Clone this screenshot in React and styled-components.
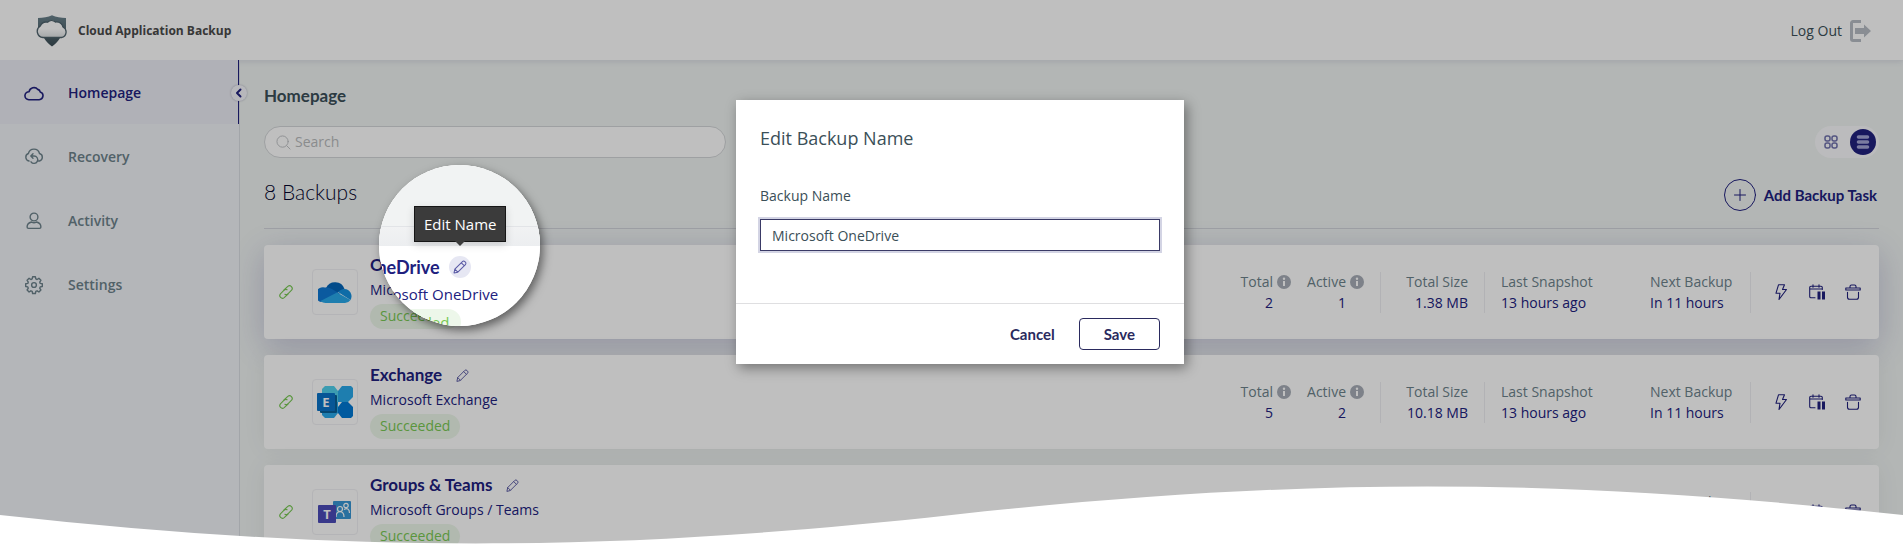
import React, { useState } from "react";
import styled, { createGlobalStyle } from "styled-components";

const navy = "#20207e";
const slate = "#6c828b";

const GlobalStyle = createGlobalStyle`
  * {
    box-sizing: border-box;
  }

  body {
    margin: 0;
    font-family: "Open Sans", "Noto Sans", sans-serif;
    font-size: 14px;
    line-height: 20px;
    color: #3b4f58;
  }

  button,
  input {
    font: inherit;
    color: inherit;
  }

  button {
    padding: 0;
    border: none;
    background: none;
    cursor: pointer;
  }

  svg {
    display: block;
    flex: none;
  }
`;

const Page = styled.div`
  position: relative;
  display: flex;
  flex-direction: column;
  height: 100vh;
  overflow: hidden;
  background: #eff3f2;
`;

const Header = styled.header`
  position: relative;
  display: flex;
  flex: none;
  justify-content: space-between;
  align-items: center;
  height: 60px;
  padding: 0 32px 0 36px;
  background: #fff;
  box-shadow: 0 1px 6px rgba(60, 60, 120, 0.15);
`;

const Brand = styled.div`
  display: flex;
  align-items: center;
  gap: 10px;
  padding-top: 1px;
  font-size: 12px;
  font-weight: 700;
  color: #4a4a4a;
`;

const LogOut = styled.button`
  display: flex;
  align-items: center;
  gap: 8px;
  padding-top: 1px;
`;

const Body = styled.div`
  display: flex;
  flex: 1;
  min-height: 0;
`;

const Sidebar = styled.nav`
  position: relative;
  flex: none;
  width: 240px;
  border-right: 1px solid #d9dce2;
  background: #f1f3f7;
`;

const NavLink = styled.a`
  display: flex;
  align-items: center;
  gap: 24px;
  height: 64px;
  padding: 1px 0 0 24px;
  font-weight: 600;
  text-decoration: none;
  color: ${props => (props.$active ? navy : slate)};
  background: ${props => (props.$active ? "#ebecf4" : "none")};
  border-right: 1px solid ${props => (props.$active ? navy : "transparent")};
`;

const CollapseButton = styled.button`
  position: absolute;
  top: 25px;
  right: -8px;
  display: flex;
  justify-content: center;
  align-items: center;
  width: 16px;
  height: 16px;
  border-radius: 50%;
  background: #f4f5fa;
  box-shadow: 0 0 2px rgba(0, 0, 60, 0.3);
  color: ${navy};
`;

const Main = styled.main`
  flex: 1;
  min-width: 0;
  padding: 25px 24px 0;
`;

const PageTitle = styled.h1`
  margin: 0 0 19px;
  font-family: Lato, sans-serif;
  font-size: 17px;
  font-weight: 700;
  line-height: 22px;
`;

const Toolbar = styled.div`
  display: flex;
  justify-content: space-between;
`;

const SearchBox = styled.label`
  display: flex;
  align-items: center;
  gap: 4px;
  width: 462px;
  height: 32px;
  padding: 0 11px;
  border: 1px solid #d3d6d8;
  border-radius: 16px;
  background: #fff;
  color: #bcbfc2;

  input {
    flex: 1;
    min-width: 0;
    padding: 0;
    border: none;
    outline: none;
    background: none;
  }

  input::placeholder {
    color: #b9bbbd;
  }
`;

const ViewSwitch = styled.div`
  display: flex;
  align-items: center;
  gap: 6px;
  height: 32px;
  padding: 0 3px;
  border-radius: 16px;
  background: #fafafc;
`;

const ViewButton = styled.button`
  display: flex;
  justify-content: center;
  align-items: center;
  width: 26px;
  height: 26px;
  border-radius: 50%;
  color: ${props => (props.$active ? "#a3a5d6" : "#6f70ac")};
  background: ${props => (props.$active ? navy : "none")};
`;

const ListHeader = styled.div`
  display: flex;
  justify-content: space-between;
  align-items: center;
  margin-bottom: 16px;
  padding: 21px 0 17px;
  border-bottom: 1px solid #d4d6dc;
`;

const Count = styled.h2`
  margin: 0 0 6px;
  font-family: Lato, sans-serif;
  font-size: 21px;
  font-weight: 300;
  line-height: 26px;
  color: #04042c;
`;

const AddButton = styled.button`
  display: flex;
  align-items: center;
  gap: 8px;
  padding-right: 2px;
  font-family: Lato, sans-serif;
  font-size: 15px;
  font-weight: 700;
  color: ${navy};
`;

const Cards = styled.ul`
  display: flex;
  flex-direction: column;
  gap: 16px;
  margin: 0;
  padding: 0;
  list-style: none;
`;

const Card = styled.li`
  display: flex;
  align-items: center;
  height: 94px;
  padding: 0 18px 0 14px;
  border-radius: 4px;
  background: #fff;
  box-shadow: ${props =>
    props.$active
      ? "0 8px 32px rgba(50, 40, 130, 0.22)"
      : "0 0 24px rgba(0, 0, 0, 0.06)"};
`;

const AppTile = styled.div`
  display: flex;
  justify-content: center;
  align-items: center;
  width: 46px;
  height: 46px;
  margin: 0 12px 0 18px;
  border: 1px solid #f0f0f4;
  border-radius: 4px;
`;

const Info = styled.div`
  display: flex;
  flex: 1;
  flex-direction: column;
  align-items: flex-start;
`;

const NameRow = styled.div`
  display: flex;
  align-items: center;
  gap: ${props => (props.$large ? "9px" : "14px")};
  margin-bottom: 3px;
  color: #5a5aa5;
`;

const Name = styled.h3`
  margin: 0;
  font-family: Lato, sans-serif;
  font-size: ${props => (props.$large ? "18px" : "17px")};
  font-weight: 700;
  line-height: 20px;
  color: ${navy};
`;

const Service = styled.div`
  margin-bottom: ${props => (props.$large ? "5px" : "2px")};
  font-size: ${props => (props.$large ? "15px" : "14px")};
  line-height: ${props => (props.$large ? "26px" : "24px")};
  color: ${navy};
`;

const Badge = styled.span`
  padding: ${props => (props.$large ? "3px 12px" : "2px 10px 3px")};
  border-radius: 14px;
  font-size: ${props => (props.$large ? "15px" : "14px")};
  color: #78c853;
  background: #edf7ea;
`;

const Stats = styled.dl`
  display: grid;
  grid-template-columns: 50px 57px 1px 71px 1px 133px 84px 1px;
  gap: 16px;
  margin: 0 22px 0 0;
  white-space: nowrap;
`;

const Stat = styled.div`
  text-align: ${props => (props.$right ? "right" : "left")};

  dt {
    display: flex;
    justify-content: ${props => (props.$right ? "flex-end" : "flex-start")};
    align-items: center;
    gap: 4px;
    color: ${slate};
  }

  dd {
    margin: 1px ${props => (props.$info ? "18px" : "0")} 0 0;
    color: ${navy};
  }
`;

const Divider = styled.div`
  background: #eeeef2;
`;

const Actions = styled.div`
  display: flex;
  gap: 20px;
  color: ${navy};
`;

const Overlay = styled.div`
  position: absolute;
  inset: 0;
  display: flex;
  justify-content: center;
  align-items: flex-start;
  padding: 100px 0 0 17px;
  background: rgba(0, 0, 0, 0.25);
`;

const Modal = styled.form`
  width: 448px;
  background: #fff;
  box-shadow: 3px 4px 12px rgba(0, 0, 0, 0.4);
`;

const ModalBody = styled.div`
  padding: 24px 24px 52px;
`;

const ModalTitle = styled.h2`
  margin: 0 0 34px;
  font-size: 18px;
  font-weight: 400;
  line-height: 28px;
`;

const Field = styled.label`
  display: block;

  input {
    display: block;
    width: 100%;
    height: 32px;
    margin-top: 13px;
    padding: 0 11px;
    border: 1px solid #3a3a66;
    border-radius: 0;
    outline: 2px solid #d3d4e4;
  }
`;

const ModalFooter = styled.div`
  display: flex;
  justify-content: flex-end;
  gap: 24px;
  padding: 14px 24px;
  border-top: 1px solid #dfdfe1;
`;

const ModalButton = styled.button`
  height: 32px;
  padding: ${props => (props.$outlined ? "0 24px" : "0")};
  border: ${props => (props.$outlined ? "1px solid #2a2a5e" : "none")};
  border-radius: 4px;
  font-family: Lato, sans-serif;
  font-size: 15px;
  font-weight: 700;
  color: #2a2a5e;
`;

const Lens = styled.div`
  position: absolute;
  top: 165px;
  left: 379px;
  width: 161px;
  height: 161px;
  overflow: hidden;
  border-radius: 50%;
  background: #fff;
`;

const LensShadow = styled(Lens)`
  overflow: visible;
  box-shadow: 3px 4px 10px rgba(0, 0, 0, 0.5);
`;

const LensTop = styled.div`
  height: 80px;
  padding-top: 61px;
  background: #f1f3f3;

  &::after {
    content: "";
    display: block;
    height: 19px;
    border-top: 1px solid #e2e4e7;
    background: linear-gradient(#f1f2f3, #eceef0);
  }
`;

const LensInfo = styled.div`
  margin: 11px 0 0 -17px;
  white-space: nowrap;
`;

const EditBubble = styled.span`
  display: flex;
  justify-content: center;
  align-items: center;
  width: 22px;
  height: 22px;
  border-radius: 50%;
  background: #e6e7f3;
`;

const Tooltip = styled.div`
  position: absolute;
  top: 206px;
  left: 414px;
  padding: 7px 9px;
  border: 1px solid #161616;
  font-size: 15px;
  color: #fff;
  background: #3b3b3b;
  box-shadow: 0 3px 8px rgba(0, 0, 0, 0.15);

  &::after {
    content: "";
    position: absolute;
    top: 100%;
    left: 50%;
    margin-left: -5px;
    border: 5px solid transparent;
    border-top-color: #3b3b3b;
  }
`;

const Wave = styled.svg`
  position: absolute;
  bottom: 0;
  left: 0;
  width: 100%;
  height: 58px;
`;

const Icon = ({ size = 16, width = 1.2, box = 16, children }) => (
  <svg
    width={size}
    height={size}
    viewBox={`0 0 ${box} ${box}`}
    fill="none"
    stroke="currentColor"
    strokeWidth={width}
    strokeLinecap="round"
    strokeLinejoin="round"
    aria-hidden="true"
  >
    {children}
  </svg>
);

const ShieldLogo = () => (
  <svg width="32" height="32" viewBox="0 0 32 32" aria-hidden="true">
    <defs>
      <linearGradient id="shield" x1="0" y1="0" x2="0" y2="1">
        <stop offset="0" stopColor="#6b838d" />
        <stop offset="1" stopColor="#3b4d55" />
      </linearGradient>
      <linearGradient id="cloud" x1="0" y1="0" x2="0" y2="1">
        <stop offset="0.5" stopColor="#fff" />
        <stop offset="1" stopColor="#dde0e2" />
      </linearGradient>
    </defs>
    <path
      d="M16 .3C12 2 7 3 2 3v14h28V3C25 3 20 2 16 .3ZM8 23h16c-2 3.500-5 6.500-8 8.500-3-2-6-5-8-8.500Z"
      fill="url(#shield)"
    />
    <path
      d="M7 22.500A6.200 6.200 0 0 1 4.300 11 6.500 6.500 0 0 1 11.500 7.200a6 6 0 0 1 8-.2 7 7 0 0 1 7.500 5 5.600 5.600 0 0 1-1.500 10.500Z"
      fill="url(#cloud)"
      stroke="#4f636d"
      strokeWidth="1.300"
    />
  </svg>
);

const LogOutIcon = () => (
  <svg width="21" height="22" viewBox="0 0 21 22" aria-hidden="true">
    <path
      d="M11 1.500H3A1.500 1.500 0 0 0 1.500 3v16A1.500 1.500 0 0 0 3 20.500h8"
      fill="none"
      stroke="#b7bdc4"
      strokeWidth="3"
    />
    <path d="M5 8h9V4.500L21 11l-7 6.500V14H5Z" fill="#b7bdc4" />
  </svg>
);

const navIcons = {
  cloud: (
    <Icon size={20} width={1.6} box={20}>
      <path d="M4.800 16.700h10.400a4 4 0 0 0 1-7.800 3.200 3.200 0 0 0-2.400-2.500 5 5 0 0 0-8.700 2.300 4 4 0 0 0-.3 8Z" />
    </Icon>
  ),
  recovery: (
    <Icon size={20} width={1.4} box={20}>
      <path d="M5 14a3.900 3.900 0 0 1-.6-7.500 5.700 5.700 0 0 1 11.100 0A3.900 3.900 0 0 1 15.500 14h-1" />
      <path d="M6.800 9H10a3.700 3.700 0 1 1-3 5.800M9 6.800L6.800 9 9 11.200" />
    </Icon>
  ),
  user: (
    <Icon size={20} width={1.4} box={20}>
      <circle cx="10" cy="6" r="3.900" />
      <path d="M7.500 11c-3 .8-4.400 2.500-4.400 5 0 .9.400 1.400 1.400 1.400h11c1 0 1.400-.5 1.400-1.400 0-2.500-1.400-4.200-4.400-5-1.500 1-3.500 1-5 0Z" />
    </Icon>
  ),
  gear: (
    <Icon size={20} width={1.4} box={20}>
      <circle cx="10" cy="10" r="2.400" />
      <path d="M8.600 1.800h2.800l.4 2.100 1.300.6 1.800-1.200 2 2-1.200 1.800.5 1.300 2.100.4v2.700l-2.100.4-.5 1.300 1.200 1.800-2 2-1.800-1.200-1.300.6-.4 2.100H8.600l-.4-2.100-1.300-.6L5.100 17l-2-2 1.200-1.800-.5-1.300-2.100-.4V8.800l2.100-.4.500-1.300-1.200-1.800 2-2 1.800 1.200 1.300-.6Z" />
    </Icon>
  )
};

const PencilIcon = ({ size = 13 }) => (
  <Icon size={size} width={1.2}>
    <path d="M1.200 14.800l.9-4.300L10.800 1.800a1.900 1.900 0 0 1 2.700 0l.7.7a1.900 1.900 0 0 1 0 2.700l-8.700 8.700ZM9.500 3.200l3.300 3.300M2.100 10.500l3.400 3.400" />
  </Icon>
);

const LinkIcon = () => (
  <Icon width={1.1}>
    <g stroke="#78c853">
      <path d="M6 6l3.800-3.600a2.700 2.700 0 0 1 3.800 3.800L9.900 9.900a2.600 2.600 0 0 1-3 .4" />
      <path d="M10 10l-3.800 3.600a2.700 2.700 0 0 1-3.800-3.800l3.700-3.700a2.600 2.600 0 0 1 3-.4" />
    </g>
  </Icon>
);

const InfoIcon = () => (
  <svg width="14" height="14" viewBox="0 0 14 14" aria-hidden="true">
    <circle cx="7" cy="7" r="7" fill="#a7adb7" />
    <circle cx="7" cy="3.700" r="1.200" fill="#fff" />
    <path d="M6 6h2v5H6Z" fill="#fff" />
  </svg>
);

const OneDriveIcon = () => (
  <svg width="34" height="22" viewBox="0 0 34 22" aria-hidden="true">
    <path d="M8 7A10 10 0 0 1 26.500 8L17 13Z" fill="#0364b8" />
    <path d="M7 6.500c3-.3 5 .3 7 1.500l8 4.800L3 21A7.500 7.500 0 0 1 7 6.500Z" fill="#0f78d4" />
    <path d="M20 11c2-2 4-3 6.500-3a7.300 7.300 0 0 1 6 11Z" fill="#1490df" />
    <path d="M2.500 20L19 11.500 32.500 19a7 7 0 0 1-5.500 3H8a8 8 0 0 1-5.500-2Z" fill="#28a8ea" />
  </svg>
);

const ExchangeIcon = () => (
  <svg width="36" height="33" viewBox="0 0 36 33" aria-hidden="true">
    <path d="M8 0h9l4 5v11H5V3Z" fill="#50d0ec" />
    <path d="M5 16h16v11l-4 5H8l-3-3Z" fill="#28a8ea" />
    <path d="M25 0h9l2 2v9l-5 5H21V5Z" fill="#28a8ea" />
    <path d="M25 16h6l5 5v9l-2 2h-9l-4-5v-6Z" fill="#0078d4" />
    <rect x="3" y="9" width="17" height="18" rx="1" fill="#086098" />
    <rect y="7" width="18" height="18" rx="1" fill="#0a73c8" />
    <text
      x="9"
      y="21"
      textAnchor="middle"
      fontFamily="Open Sans, sans-serif"
      fontSize="13"
      fontWeight="700"
      fill="#fff"
    >
      E
    </text>
  </svg>
);

const TeamsIcon = () => (
  <svg width="34" height="24" viewBox="0 0 34 24" aria-hidden="true">
    <rect x="15" y="1" width="18" height="18" rx="1" fill="#3796d4" />
    <g fill="none" stroke="#fff" strokeWidth="1.200">
      <circle cx="22" cy="9" r="2.500" />
      <circle cx="28" cy="5.500" r="2.200" />
      <path d="M18 17c0-7 8-7 8 0M26 9.500c3-2 5.500-.5 5.500 3.500" />
    </g>
    <rect y="5" width="18" height="18" rx="1" fill="#4b4bb8" />
    <text
      x="9"
      y="19"
      textAnchor="middle"
      fontFamily="Open Sans, sans-serif"
      fontSize="13"
      fontWeight="700"
      fill="#fff"
    >
      T
    </text>
  </svg>
);

const BoltIcon = () => (
  <Icon width={1.1}>
    <path d="M5.500.8h6l-2 4.700h4L6 15.500l1-6.300H3Z" />
  </Icon>
);

const CalendarIcon = () => (
  <Icon width={1.1}>
    <path d="M6 13.800H2A1.300 1.300 0 0 1 .700 12.500V3.500A1.300 1.300 0 0 1 2 2.200h10a1.300 1.300 0 0 1 1.300 1.300v2M.700 5h12.600M4 .700v2.500M10 .700v2.500" />
    <path d="M8.500 7.500h3v8h-3ZM13 7.500h3v8h-3Z" fill="currentColor" stroke="none" />
  </Icon>
);

const TrashIcon = () => (
  <Icon width={1.1}>
    <path d="M.800 4h14.400v2H.800ZM5 4V2.500A1.500 1.500 0 0 1 6.500 1h3A1.500 1.500 0 0 1 11 2.500V4M2.500 8.200v5a2 2 0 0 0 2 2h7a2 2 0 0 0 2-2v-5" />
  </Icon>
);

const navItems = [
  { label: "Homepage", icon: "cloud", active: true },
  { label: "Recovery", icon: "recovery" },
  { label: "Activity", icon: "user" },
  { label: "Settings", icon: "gear" }
];

const backups = [
  {
    name: "OneDrive",
    service: "Microsoft OneDrive",
    icon: <OneDriveIcon />,
    total: 2,
    active: 1,
    size: "1.38 MB",
    hovered: true
  },
  {
    name: "Exchange",
    service: "Microsoft Exchange",
    icon: <ExchangeIcon />,
    total: 5,
    active: 2,
    size: "10.18 MB"
  },
  {
    name: "Groups & Teams",
    service: "Microsoft Groups / Teams",
    icon: <TeamsIcon />,
    total: 3,
    active: 3,
    size: "2.04 MB"
  }
];

const BackupCard = ({ backup }) => (
  <Card $active={backup.hovered}>
    <LinkIcon />
    <AppTile>{backup.icon}</AppTile>
    <Info>
      <NameRow>
        <Name>{backup.name}</Name>
        <button type="button" aria-label={`Edit ${backup.name}`}>
          <PencilIcon />
        </button>
      </NameRow>
      <Service>{backup.service}</Service>
      <Badge>Succeeded</Badge>
    </Info>
    <Stats>
      <Stat $right $info>
        <dt>
          Total <InfoIcon />
        </dt>
        <dd>{backup.total}</dd>
      </Stat>
      <Stat $right $info>
        <dt>
          Active <InfoIcon />
        </dt>
        <dd>{backup.active}</dd>
      </Stat>
      <Divider />
      <Stat $right>
        <dt>Total Size</dt>
        <dd>{backup.size}</dd>
      </Stat>
      <Divider />
      <Stat>
        <dt>Last Snapshot</dt>
        <dd>13 hours ago</dd>
      </Stat>
      <Stat>
        <dt>Next Backup</dt>
        <dd>In 11 hours</dd>
      </Stat>
      <Divider />
    </Stats>
    <Actions>
      <button type="button" aria-label="Run now">
        <BoltIcon />
      </button>
      <button type="button" aria-label="Pause schedule">
        <CalendarIcon />
      </button>
      <button type="button" aria-label="Delete">
        <TrashIcon />
      </button>
    </Actions>
  </Card>
);

const EditModal = () => {
  const [name, setName] = useState("Microsoft OneDrive");
  return (
    <Modal onSubmit={e => e.preventDefault()}>
      <ModalBody>
        <ModalTitle>Edit Backup Name</ModalTitle>
        <Field>
          Backup Name
          <input value={name} onChange={e => setName(e.target.value)} />
        </Field>
      </ModalBody>
      <ModalFooter>
        <ModalButton type="button">Cancel</ModalButton>
        <ModalButton type="submit" $outlined>
          Save
        </ModalButton>
      </ModalFooter>
    </Modal>
  );
};

const App = () => (
  <Page>
    <GlobalStyle />
    <Header>
      <Brand>
        <ShieldLogo />
        Cloud Application Backup
      </Brand>
      <LogOut type="button">
        Log Out
        <LogOutIcon />
      </LogOut>
    </Header>
    <Body>
      <Sidebar>
        {navItems.map(item => (
          <NavLink key={item.label} href="#" $active={item.active}>
            {navIcons[item.icon]}
            {item.label}
          </NavLink>
        ))}
        <CollapseButton type="button" aria-label="Collapse menu">
          <Icon size={10} width={2} box={10}>
            <path d="M6.500 1.500L3 5l3.500 3.500" />
          </Icon>
        </CollapseButton>
      </Sidebar>
      <Main>
        <PageTitle>Homepage</PageTitle>
        <Toolbar>
          <SearchBox>
            <Icon size={15} width={1}>
              <circle cx="7" cy="7" r="6" />
              <path d="M11.500 11.500L15 15" />
            </Icon>
            <input type="search" placeholder="Search" aria-label="Search" />
          </SearchBox>
          <ViewSwitch>
            <ViewButton type="button" aria-label="Grid view">
              <Icon size={14} width={1.5} box={14}>
                <rect x="1" y="1" width="5" height="5" rx="2" />
                <rect x="8" y="1" width="5" height="5" rx="2" />
                <rect x="1" y="8" width="5" height="5" rx="2" />
                <rect x="8" y="8" width="5" height="5" rx="2" />
              </Icon>
            </ViewButton>
            <ViewButton type="button" aria-label="List view" $active>
              <Icon size={14} width={3.6} box={14}>
                <path d="M2.500 2h9M2.500 7h9M2.500 12h9" />
              </Icon>
            </ViewButton>
          </ViewSwitch>
        </Toolbar>
        <ListHeader>
          <Count>8 Backups</Count>
          <AddButton type="button">
            <Icon size={32} width={1} box={32}>
              <circle cx="16" cy="16" r="15.500" />
              <path d="M10.500 16h11M16 10.500v11" />
            </Icon>
            Add Backup Task
          </AddButton>
        </ListHeader>
        <Cards>
          {backups.map(backup => (
            <BackupCard key={backup.name} backup={backup} />
          ))}
        </Cards>
      </Main>
    </Body>
    <Overlay>
      <EditModal />
    </Overlay>
    <LensShadow />
    <Lens>
      <LensTop />
      <LensInfo>
        <NameRow $large>
          <Name $large>OneDrive</Name>
          <EditBubble>
            <PencilIcon size={14} />
          </EditBubble>
        </NameRow>
        <Service $large>Microsoft OneDrive</Service>
        <Badge $large>Succeeded</Badge>
      </LensInfo>
    </Lens>
    <Tooltip role="tooltip">Edit Name</Tooltip>
    <Wave viewBox="0 0 1902 58" preserveAspectRatio="none" aria-hidden="true">
      <path
        d="M0 29C346 67 605 67 951 29S1556-9 1902 29V58H0Z"
        fill="#fff"
      />
    </Wave>
  </Page>
);

export default App;
